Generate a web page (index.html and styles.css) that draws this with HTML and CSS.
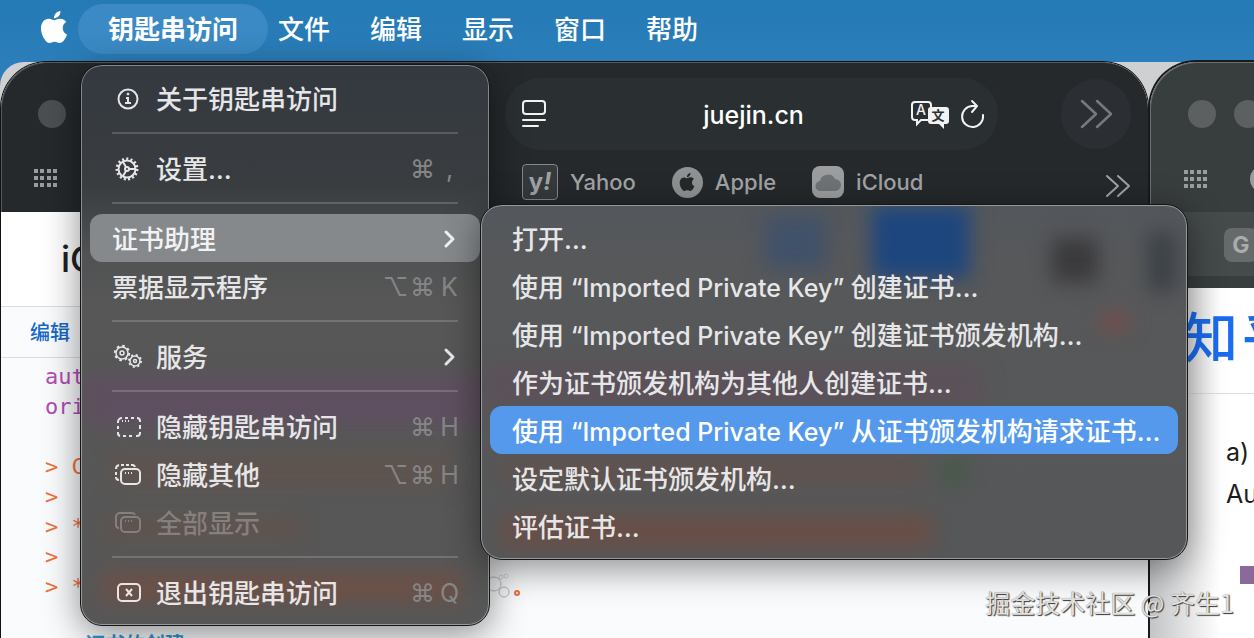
FILE: index.html
```html
<!DOCTYPE html>
<html lang="zh-CN">
<head>
    <meta charset="UTF-8">
    <meta name="viewport" content="width=device-width, initial-scale=1.0">
    <title>钥匙串访问</title>
    <link rel="stylesheet" href="styles.css">
</head>
<body>

    <!-- Menu bar -->
    <nav class="menubar">
        <button type="button" class="apple-button" aria-label="Apple">
            <svg width="32" height="32" viewBox="0 0 24 24" fill="currentColor"><path d="M12.152 6.896c-.948 0-2.415-1.078-3.96-1.04-2.04.027-3.91 1.183-4.961 3.014-2.117 3.675-.546 9.103 1.519 12.09 1.013 1.454 2.208 3.09 3.792 3.039 1.52-.065 2.09-.987 3.935-.987 1.831 0 2.35.987 3.96.948 1.637-.026 2.676-1.48 3.676-2.948 1.156-1.688 1.636-3.325 1.662-3.415-.039-.013-3.182-1.221-3.22-4.857-.026-3.04 2.48-4.494 2.597-4.559-1.429-2.09-3.623-2.324-4.39-2.376-2-.156-3.675 1.09-4.61 1.09zM15.53 3.83c.843-1.012 1.4-2.427 1.245-3.83-1.207.052-2.662.805-3.532 1.818-.78.896-1.454 2.338-1.273 3.714 1.338.104 2.715-.688 3.559-1.701"/></svg>
        </button>
        <button type="button" class="menubar-item menubar-app">钥匙串访问</button>
        <button type="button" class="menubar-item">文件</button>
        <button type="button" class="menubar-item">编辑</button>
        <button type="button" class="menubar-item">显示</button>
        <button type="button" class="menubar-item">窗口</button>
        <button type="button" class="menubar-item">帮助</button>
    </nav>

    <!-- Windows behind the menu -->
    <main class="workspace">
        <section class="window browser">
            <header class="toolbar">
                <div class="toolbar-row">
                    <div class="toolbar-left"><span class="light"></span></div>
                    <div class="address">
                        <svg width="26" height="30" viewBox="0 0 26 30" fill="none" stroke="currentColor" stroke-width="2" stroke-linecap="round"><rect x="2" y="2" width="22" height="13" rx="3"/><path d="M2 21h22M2 27h15"/></svg>
                        <input type="text" value="juejin.cn" aria-label="网址">
                        <svg width="40" height="30" viewBox="0 0 40 30">
                            <path d="M18 21h-7l-4 4v-4H5a3 3 0 0 1-3-3V6a3 3 0 0 1 3-3h13a3 3 0 0 1 3 3v4" fill="none" stroke="currentColor" stroke-width="2"/>
                            <text class="glyph-a" x="11" y="16">A</text>
                            <path d="M21 8h15a3 3 0 0 1 3 3v11a3 3 0 0 1-3 3h-2v5l-5-5h-8a3 3 0 0 1-3-3V11a3 3 0 0 1 3-3z" fill="currentColor"/>
                            <text class="glyph-wen" x="28" y="21">文</text>
                        </svg>
                        <svg width="26" height="30" viewBox="0 0 26 30" fill="none" stroke="currentColor" stroke-width="2" stroke-linecap="round" stroke-linejoin="round"><path d="M23 16A10.500 10.500 0 1 1 12.500 7H17M12 2l5 5-5 6"/></svg>
                    </div>
                    <button type="button" class="round-button" aria-label="更多">
                        <svg width="34" height="30" viewBox="0 0 34 30" fill="none" stroke="currentColor" stroke-width="2.500" stroke-linecap="round" stroke-linejoin="round"><path d="M3 2l14 13L3 28M18 2l14 13-14 13"/></svg>
                    </button>
                </div>
                <div class="toolbar-row favorites">
                    <div class="toolbar-left">
                        <svg class="grid-icon" width="24" height="18" viewBox="0 0 24 18"><path d="M2 0v18M8 0v18M15 0v18M21 0v18" stroke="currentColor" stroke-width="4" stroke-dasharray="4 3"/></svg>
                    </div>
                    <a href="#"><span class="favicon yahoo">y<i>!</i></span>Yahoo</a>
                    <a href="#"><span class="favicon apple"><svg width="18" height="18" viewBox="0 0 24 24" fill="currentColor"><path d="M12.152 6.896c-.948 0-2.415-1.078-3.96-1.04-2.04.027-3.91 1.183-4.961 3.014-2.117 3.675-.546 9.103 1.519 12.09 1.013 1.454 2.208 3.09 3.792 3.039 1.52-.065 2.09-.987 3.935-.987 1.831 0 2.35.987 3.96.948 1.637-.026 2.676-1.48 3.676-2.948 1.156-1.688 1.636-3.325 1.662-3.415-.039-.013-3.182-1.221-3.22-4.857-.026-3.04 2.48-4.494 2.597-4.559-1.429-2.09-3.623-2.324-4.39-2.376-2-.156-3.675 1.09-4.61 1.09zM15.53 3.83c.843-1.012 1.4-2.427 1.245-3.83-1.207.052-2.662.805-3.532 1.818-.78.896-1.454 2.338-1.273 3.714 1.338.104 2.715-.688 3.559-1.701"/></svg></span>Apple</a>
                    <a href="#"><span class="favicon icloud"><svg width="26" height="20" viewBox="0 0 26 20" fill="currentColor"><path d="M6 19a5 5 0 0 1-1-10 8 8 0 0 1 15-2 6 6 0 0 1 0 12z"/></svg></span>iCloud</a>
                    <button type="button" class="more-favorites" aria-label="更多收藏">
                        <svg width="26" height="24" viewBox="0 0 26 24" fill="none" stroke="currentColor" stroke-width="2" stroke-linecap="round" stroke-linejoin="round"><path d="M2 2l11 10L2 22M13 2l11 10-11 10"/></svg>
                    </button>
                </div>
            </header>
            <div class="page">
                <h1 class="page-title">iC</h1>
                <div class="page-tabs"><a href="#">编辑</a></div>
                <div class="code">
                    <p class="key">aut</p>
                    <p class="key">ori</p>
                    <p></p>
                    <p>&gt; C</p>
                    <p>&gt;</p>
                    <p>&gt; *</p>
                    <p>&gt;</p>
                    <p class="last-line"><span>&gt; *</span><svg width="42" height="30" viewBox="0 0 42 30" fill="none"><circle cx="7" cy="12" r="7" stroke="#b9bdc3"/><circle cx="17" cy="20" r="5" stroke="#b5b8c6"/><circle cx="14" cy="5" r="2" stroke="#d5d8dc"/><circle cx="19" cy="4" r="2" stroke="#d5d8dc"/><circle cx="30" cy="21" r="2" stroke="currentColor" stroke-width="2"/></svg></p>
                    <a class="heading" href="#">证书的创建</a>
                </div>
            </div>
        </section>

        <section class="window side-window">
            <header class="side-toolbar">
                <div class="side-lights"><span class="light"></span><span class="light"></span></div>
                <div class="side-tools">
                    <svg class="grid-icon" width="24" height="18" viewBox="0 0 24 18"><path d="M2 0v18M8 0v18M15 0v18M21 0v18" stroke="currentColor" stroke-width="4" stroke-dasharray="4 3"/></svg>
                    <span class="light pale"></span>
                </div>
                <div class="side-tabs"><span class="tab-icon">G</span></div>
            </header>
            <div class="side-page">
                <div class="zhihu"><span>知</span><span>乎</span></div>
                <div class="side-text">
                    <p>a)</p>
                    <p>Au</p>
                    <div class="block"></div>
                </div>
            </div>
        </section>
    </main>

    <!-- Application menu -->
    <div class="menu app-menu">
        <div class="glass"></div>
        <button type="button" class="menu-item">
            <svg class="icon" viewBox="0 0 32 32"><circle cx="16" cy="16" r="9.500"/><path d="M14 15h2v5M13 20h6"/><circle class="fill" cx="16" cy="11" r="1"/></svg>
            <span class="label">关于钥匙串访问</span>
        </button>
        <hr>
        <button type="button" class="menu-item">
            <svg class="icon" viewBox="0 0 32 32"><circle cx="15" cy="16" r="8.500"/><circle cx="15" cy="16" r="10" stroke-width="3" stroke-dasharray="2 2.189"/><circle cx="15" cy="16" r="2"/><path d="M17 16h6M14 14l-3-5M14 18l-3 5"/></svg>
            <span class="label">设置…</span>
            <span class="keys"><kbd>⌘</kbd><kbd>,</kbd></span>
        </button>
        <hr>
        <div class="submenu-host">
            <button type="button" class="menu-item open">
                <span class="label">证书助理</span>
                <svg class="chevron" viewBox="0 0 14 20"><path d="M3 3l7 7-7 7"/></svg>
            </button>

            <div class="menu submenu">
                <div class="glass"></div>
                <button type="button" class="menu-item"><span class="label">打开…</span></button>
                <button type="button" class="menu-item"><span class="label">使用<span class="latin"> “Imported Private Key” </span>创建证书…</span></button>
                <button type="button" class="menu-item"><span class="label">使用<span class="latin"> “Imported Private Key” </span>创建证书颁发机构…</span></button>
                <button type="button" class="menu-item"><span class="label">作为证书颁发机构为其他人创建证书…</span></button>
                <button type="button" class="menu-item selected"><span class="label">使用<span class="latin"> “Imported Private Key” </span>从证书颁发机构请求证书…</span></button>
                <button type="button" class="menu-item"><span class="label">设定默认证书颁发机构…</span></button>
                <button type="button" class="menu-item"><span class="label">评估证书…</span></button>
            </div>
        </div>
        <button type="button" class="menu-item">
            <span class="label">票据显示程序</span>
            <span class="keys"><kbd>⌥</kbd><kbd>⌘</kbd><kbd>K</kbd></span>
        </button>
        <hr>
        <button type="button" class="menu-item">
            <svg class="icon" viewBox="0 0 32 32"><circle cx="10" cy="12" r="6" stroke-width="1.500"/><circle cx="10" cy="12" r="7.200" stroke-width="2" stroke-dasharray="2.600 3.055"/><circle cx="10" cy="12" r="2" stroke-width="1.500"/><circle cx="23" cy="20" r="5" stroke-width="1.500"/><circle cx="23" cy="20" r="6" stroke-width="2" stroke-dasharray="2 2.712"/><circle cx="23" cy="20" r="1.500" stroke-width="1.500"/></svg>
            <span class="label">服务</span>
            <svg class="chevron" viewBox="0 0 14 20"><path d="M3 3l7 7-7 7"/></svg>
        </button>
        <hr>
        <button type="button" class="menu-item">
            <svg class="icon" viewBox="0 0 32 32"><path d="M6 12v-1a4 4 0 0 1 4-4M13 7h3M19 7h3M25 7a3 3 0 0 1 3 3v1M28 14v4M28 21v1a3 3 0 0 1-3 3h-1M20 25h-3M14 25h-3M8 25a3 3 0 0 1-2-3v-1M6 18v-3"/><path d="M10 10h1M13 10h1M16 10h1"/></svg>
            <span class="label">隐藏钥匙串访问</span>
            <span class="keys"><kbd>⌘</kbd><kbd>H</kbd></span>
        </button>
        <button type="button" class="menu-item">
            <svg class="icon" viewBox="0 0 32 32"><rect x="9" y="10" width="19" height="15" rx="4"/><path d="M4 10a4 4 0 0 1 3-4M9 6h3M14 6h3M19 6h2a3 3 0 0 1 2 2M4 13v3M4 18a3 3 0 0 0 3 3"/><path d="M13 14h1M16 14h1M19 14h1"/></svg>
            <span class="label">隐藏其他</span>
            <span class="keys"><kbd>⌥</kbd><kbd>⌘</kbd><kbd>H</kbd></span>
        </button>
        <button type="button" class="menu-item" disabled>
            <svg class="icon" viewBox="0 0 32 32"><rect x="9" y="10" width="19" height="15" rx="4"/><path d="M7 21a3 3 0 0 1-3-3v-8a4 4 0 0 1 4-4h12a3 3 0 0 1 3 2"/><path d="M13 14h1M16 14h1M19 14h1"/></svg>
            <span class="label">全部显示</span>
        </button>
        <hr>
        <button type="button" class="menu-item">
            <svg class="icon" viewBox="0 0 32 32"><rect x="6" y="7" width="22" height="17" rx="4"/><path d="M14 12l6 7M20 12l-6 7"/></svg>
            <span class="label">退出钥匙串访问</span>
            <span class="keys"><kbd>⌘</kbd><kbd>Q</kbd></span>
        </button>
    </div>

    <div class="watermark">掘金技术社区 @ 齐生1</div>

</body>
</html>
```
FILE: styles.css
```css
* { box-sizing: border-box; }

body {
    position: relative;
    display: flex;
    flex-direction: column;
    height: 100vh;
    margin: 0;
    overflow: hidden;
    background: #2b7eba;
    font-family: Inter, "Noto Sans CJK SC", sans-serif;
    font-size: 26px;
    font-weight: 500;
}

button {
    padding: 0;
    border: none;
    background: none;
    color: inherit;
    font: inherit;
}
svg { display: block; flex: none; }
a { color: inherit; text-decoration: none; }
p { margin: 0; }

/* --- Menu bar --- */
.menubar {
    display: flex;
    flex: none;
    align-items: flex-start;
    height: 62px;
    padding: 4px 38px;
    background: linear-gradient(#247ab5, #2b7eba);
    color: #fff;
}
.apple-button { height: 46px; margin-right: 8px; }
.menubar-item { height: 50px; padding: 0 20px 4px; white-space: nowrap; }
.menubar-app {
    margin-right: -10px;
    padding: 0 30px 4px;
    border-radius: 25px;
    background: #3b8ac5;
    font-weight: 700;
}

/* --- Windows --- */
.workspace {
    display: flex;
    flex: 1;
    gap: 2px;
    min-height: 0;
    padding-left: 1px;
    border-radius: 24px 0 0 0;
    background: #cfd0d1;
}
.window { overflow: hidden; background: #fff; }
.browser {
    flex: 1;
    min-width: 0;
    border-radius: 46px 46px 0 0;
    box-shadow: 0 0 0 1px #111;
}
.light { width: 28px; height: 28px; border-radius: 50%; background: #4c4f51; }
.grid-icon { color: #9a9d9e; }

.toolbar {
    height: 150px;
    padding: 16px 17px 0 0;
    border-radius: 46px 46px 0 0;
    background: #25292c;
    box-shadow: inset 1px 1px 0 #55595b;
}
.toolbar-row { display: flex; align-items: center; height: 72px; }
.toolbar-left { flex: none; width: 504px; padding-left: 37px; }
.toolbar-left .light { display: block; }
.address {
    display: flex;
    flex: 1;
    align-items: center;
    min-width: 0;
    height: 72px;
    padding: 0 12px 0 16px;
    border-radius: 36px;
    background: #2a2f32;
    color: #f2f2f2;
}
.address input {
    flex: 1;
    min-width: 0;
    padding: 2px 0 0 50px;
    border: none;
    background: none;
    color: #fff;
    font: inherit;
    font-size: 25px;
    text-align: center;
}
.address svg:last-child { margin-left: 10px; }
.glyph-a { fill: currentColor; font-size: 14px; text-anchor: middle; }
.glyph-wen { fill: #2a2f32; font-size: 13px; font-weight: 700; text-anchor: middle; }
.round-button {
    display: flex;
    align-items: center;
    justify-content: center;
    width: 70px;
    height: 70px;
    margin-left: 63px;
    border-radius: 50%;
    background: #2b2f34;
    color: #777a7c;
}

.favorites { height: 62px; padding-top: 2px; color: #a1a4a5; font-size: 22px; font-weight: 500; }
.favorites .toolbar-left { width: 521px; padding: 0 0 8px 33px; }
.favorites a { display: flex; align-items: center; gap: 12px; margin-right: 36px; }
.favicon { display: flex; align-items: center; justify-content: center; }
.yahoo {
    width: 36px;
    height: 36px;
    border: 1px solid #85888a;
    border-radius: 4px;
    background: #353a3c;
    font-size: 24px;
    font-weight: 700;
    line-height: 30px;
}
.apple { width: 31px; height: 31px; border-radius: 50%; background: #8f9293; color: #25292c; }
.icloud { width: 32px; height: 32px; border-radius: 8px; background: #9b9d9e; color: #707375; }
.more-favorites { margin-left: auto; padding-top: 8px; color: #a1a4a5; }

/* --- Web page in the first window --- */
.page { height: 100%; background: #f9fbfd; color: #202124; }
.page-title {
    height: 95px;
    margin: 0;
    padding-left: 60px;
    border-bottom: 1px solid #dcdde0;
    background: #fff;
    font-size: 36px;
    font-weight: 500;
    line-height: 94px;
}
.page-tabs {
    height: 51px;
    padding-left: 29px;
    border-bottom: 1px solid #dcdde0;
    color: #1668c8;
    font-size: 20px;
    line-height: 53px;
}
.code {
    padding: 4px 0 0 44px;
    color: #f4703a;
    font-family: "DejaVu Sans Mono", monospace;
    font-size: 22px;
    font-weight: 400;
    line-height: 30px;
}
.code p { height: 30px; }
.code .key { color: #b44cb4; }
.code .last-line { display: flex; justify-content: space-between; width: 484px; }
.heading {
    display: block;
    padding: 28px 40px;
    color: #2f97d4;
    font-family: Inter, "Noto Sans CJK SC", sans-serif;
    font-size: 20px;
    font-weight: 700;
}

/* --- Second window, cut by the screen edge --- */
.side-window {
    flex: none;
    width: 104px;
    border-radius: 46px 0 0 0;
    box-shadow: 0 0 0 2px #17191c;
}
.side-toolbar {
    height: 226px;
    border-radius: 46px 0 0 0;
    background: #383d3e;
    box-shadow: inset 1px 1px 0 #6a6e70;
}
.side-lights { display: flex; gap: 18px; height: 96px; padding: 38px 0 0 38px; }
.side-lights .light, .side-tools .light { flex: none; background: #5c6061; }
.side-tools { display: flex; align-items: center; gap: 42px; height: 54px; padding: 0 0 12px 34px; }
.side-tools .pale { background: #9a9d9e; }
.side-tabs { height: 64px; padding: 16px 0 0 74px; background: #454a4a; }
.tab-icon {
    display: block;
    width: 34px;
    height: 34px;
    border-radius: 8px;
    background: #666a6a;
    color: #a9acac;
    font-size: 23px;
    font-weight: 700;
    line-height: 34px;
    text-align: center;
}
.side-page { height: 100%; background: linear-gradient(to right, #c3c4c6, #fff 70px); color: #1c1c1e; }
.zhihu {
    display: flex;
    gap: 4px;
    height: 106px;
    padding-left: 34px;
    border-bottom: 1px solid #dcdcdc;
    color: #1a6cf0;
    font-size: 54px;
    font-weight: 500;
    line-height: 102px;
}
.side-text { padding: 37px 0 0 76px; font-size: 25px; font-weight: 400; line-height: 42px; }
.block { height: 18px; margin: 51px 0 0 14px; background: #896a99; }

/* --- Menus --- */
.menu {
    position: absolute;
    padding: 9px;
    border: 1px solid #141516;
    border-radius: 22px;
    color: #e6e6e8;
    box-shadow: inset 0 0 0 1px rgba(255, 255, 255, 0.4), 0 8px 36px rgba(0, 0, 0, 0.45);
}
.app-menu {
    top: 64px;
    left: 80px;
    width: 410px;
    background: linear-gradient(#343940, #393d40 120px, #505253 190px, #575757 240px);
}
.submenu-host { position: relative; }
.submenu {
    z-index: 1;
    top: -10px;
    left: 100%;
    width: 708px;
    background: linear-gradient(#53575c, #57585a 60px, #565758);
}

/* Colours of the windows showing through the glass */
.glass {
    position: absolute;
    inset: 1px;
    overflow: hidden;
    border-radius: 20px;
}
.glass::before {
    content: "";
    position: absolute;
    inset: 0;
    background-repeat: no-repeat;
    filter: blur(10px);
}
.app-menu > .glass::before {
    background-image:
        linear-gradient(rgba(98, 76, 100, 0.7), rgba(98, 76, 100, 0.7)),
        linear-gradient(rgba(112, 76, 62, 0.35), rgba(112, 76, 62, 0.35)),
        linear-gradient(rgba(112, 76, 62, 0.35), rgba(112, 76, 62, 0.35)),
        linear-gradient(rgba(120, 76, 62, 0.65), rgba(120, 76, 62, 0.65));
    background-position: 0 310px, 30px 390px, 20px 450px, 20px 506px;
    background-size: 100% 50px, 340px 30px, 200px 24px, 360px 30px;
}
.submenu > .glass::before {
    background-image:
        linear-gradient(#1d467e, #1d467e),
        linear-gradient(#40516a, #40516a),
        linear-gradient(#3a3a3c, #3a3a3c),
        linear-gradient(#3b4147, #3b4147),
        linear-gradient(#7c4a45, #7c4a45),
        linear-gradient(#3f5a40, #3f5a40),
        linear-gradient(rgba(112, 74, 62, 0.4), rgba(112, 74, 62, 0.4)),
        linear-gradient(rgba(115, 74, 62, 0.7), rgba(115, 74, 62, 0.7)),
        linear-gradient(rgba(98, 76, 90, 0.5), rgba(98, 76, 90, 0.5));
    background-position: 390px 0, 284px 10px, 570px 32px, 666px 26px, 620px 108px, 462px 256px, 20px 254px, 20px 310px, 0 160px;
    background-size: 98px 72px, 60px 52px, 46px 44px, 28px 60px, 26px 16px, 20px 20px, 420px 24px, 430px 30px, 500px 40px;
}

.menu hr {
    position: relative;
    height: 2px;
    margin: 10px 22px;
    border: none;
    background: rgba(255, 255, 255, 0.17);
}
.menu-item {
    position: relative;
    display: flex;
    align-items: center;
    width: 100%;
    height: 48px;
    padding: 1px 17px 0 22px;
    border-radius: 12px;
    text-align: left;
    white-space: nowrap;
}
.menu-item.open { background: #86898c; color: #f2f2f3; }
.menu-item.selected { background: #5599ed; color: #fff; }
.menu-item:disabled { color: #857f7d; }
.label { padding-bottom: 3px; }
.latin { font-size: 25px; white-space: pre; }
.icon {
    width: 32px;
    height: 32px;
    margin-right: 12px;
    fill: none;
    stroke: currentColor;
    stroke-width: 2;
}
.icon .fill { fill: currentColor; stroke-width: 1; }
.chevron {
    width: 14px;
    height: 20px;
    margin: 0 6px 0 auto;
    fill: none;
    stroke: currentColor;
    stroke-width: 3;
    stroke-linecap: round;
    stroke-linejoin: round;
}
.keys { display: flex; margin-left: auto; color: #858687; font-weight: 400; }
.keys kbd { width: 27px; font-family: Inter, "DejaVu Sans", sans-serif; font-size: 25px; text-align: center; }

.watermark {
    position: absolute;
    right: 20px;
    bottom: 17px;
    color: #e2e2e2;
    font-family: "Noto Sans CJK SC", sans-serif;
    font-size: 25px;
    font-weight: 400;
    line-height: 38px;
    text-shadow: 1px 1px 1px #333, 0 0 1px #888;
}
```
